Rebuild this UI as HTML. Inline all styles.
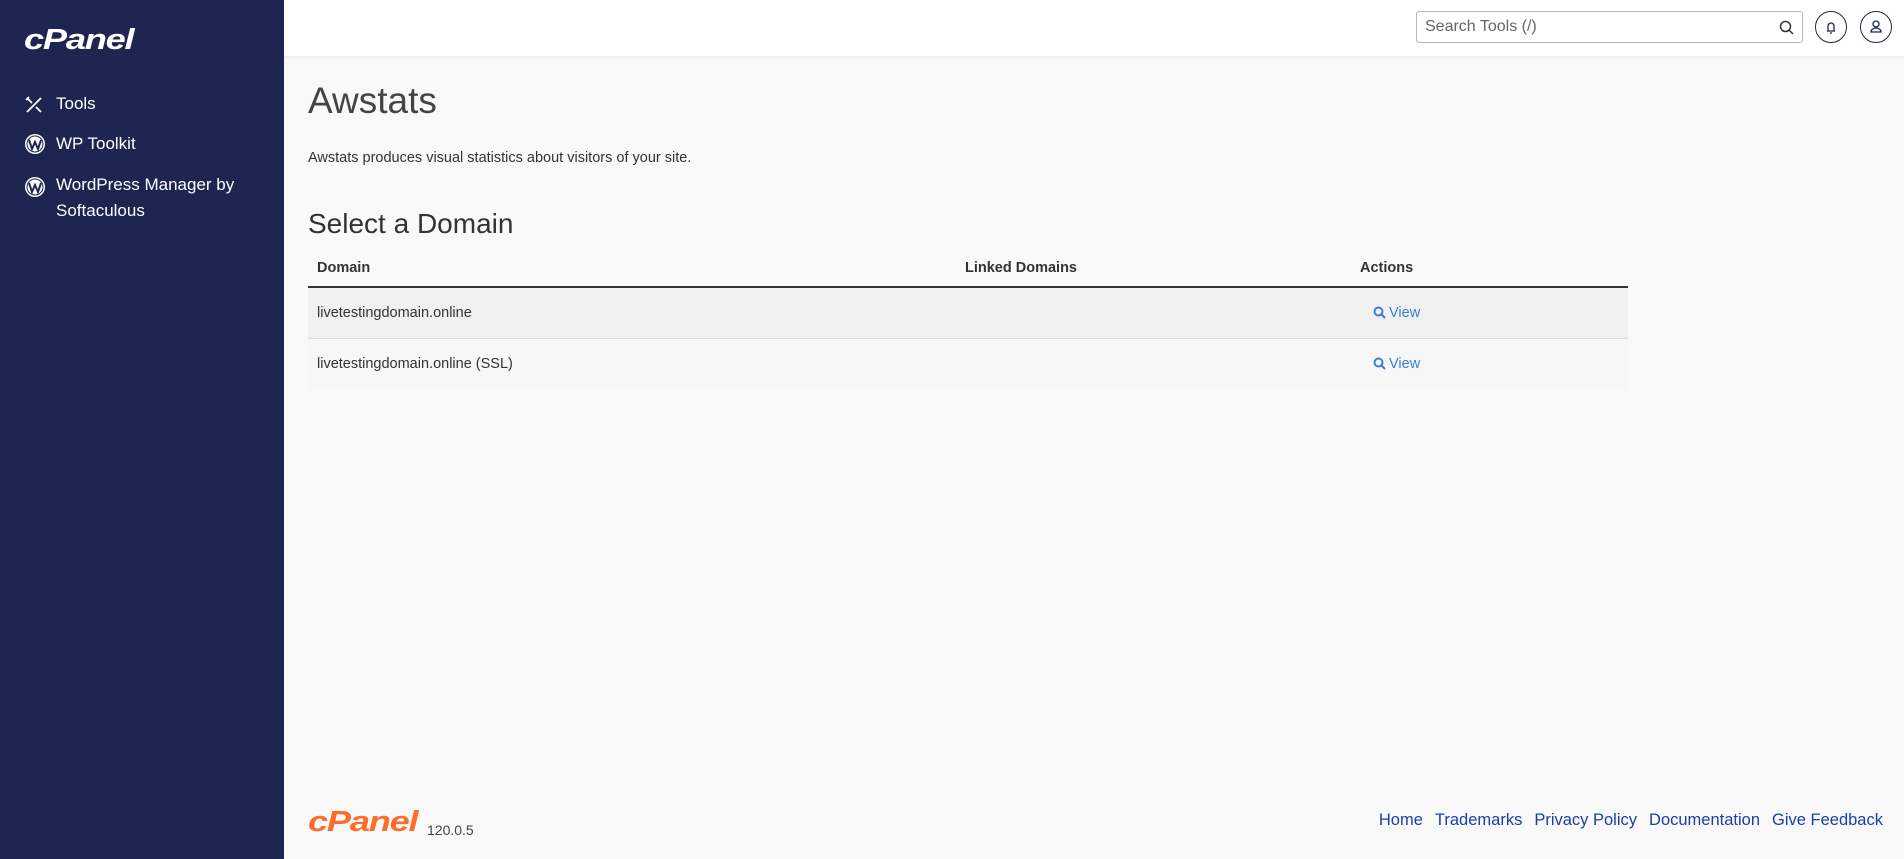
<!DOCTYPE html>
<html><head><meta charset="utf-8"><style>
*{margin:0;padding:0;box-sizing:border-box}
body{width:1904px;height:859px;overflow:hidden;background:#f9f9f9;font-family:"Liberation Sans",sans-serif;color:#333;position:relative}
.side{position:absolute;left:0;top:0;width:284px;height:859px;background:#1f2551;color:#fff}
.logo{position:absolute;font-style:italic;font-weight:bold;letter-spacing:-1px;transform:scaleX(1.25);transform-origin:left center}
.nav{position:absolute;left:56px;font-size:17px;color:#fff;line-height:26px}
.ic{position:absolute;left:24px}
.hdr{position:absolute;left:284px;top:0;right:0;height:56px;background:#fff;box-shadow:0 1px 4px rgba(0,0,0,.08)}
.search{position:absolute;left:1416px;top:11px;width:387px;height:32px;border:1px solid #b5b5c8;border-radius:3px;background:#fff;font-size:16px;color:#666;padding:6px 8px}
.circ{position:absolute;top:11px;width:32px;height:32px;border:1.3px solid #1f2551;border-radius:50%}
h1{position:absolute;left:308px;top:80px;font-size:37px;font-weight:normal;color:#444}
.desc{position:absolute;left:308px;top:150px;font-size:14.5px}
h2{position:absolute;left:308px;top:208px;font-size:28px;font-weight:normal;color:#333}
.th{position:absolute;top:260px;font-size:14.5px;font-weight:bold}
.line{position:absolute;left:308px;width:1320px}
.td{position:absolute;font-size:14.5px}
.view{position:absolute;left:1373px;font-size:14.5px;color:#3b7dd8}
.view svg{vertical-align:-2px;margin-right:3px}
.foot a{color:#1a3fa6;text-decoration:none;margin-left:12px}
</style></head><body>
<div class="side">
<div class="logo" style="left:24px;top:24px;font-size:29px">cPanel</div>
<svg class="ic" style="top:95px" width="20" height="20" viewBox="0 0 20 20" stroke="#fff" stroke-width="1.8" fill="none"><path d="M3 17L17 3M3 3l5 5M12 12l5 5M2 5l3-3"/></svg>
<div class="nav" style="top:91px">Tools</div>
<svg class="ic" style="top:133px" width="22" height="22" viewBox="0 0 22 22"><circle cx="11" cy="11" r="10" fill="#fff"/><circle cx="11" cy="11" r="8" fill="none" stroke="#1f2551" stroke-width="1"/><path d="M5 7l3 9 3-7 3 7 3-9" stroke="#1f2551" stroke-width="2" fill="none"/></svg>
<div class="nav" style="top:131px">WP Toolkit</div>
<svg class="ic" style="top:176px" width="22" height="22" viewBox="0 0 22 22"><circle cx="11" cy="11" r="10" fill="#fff"/><circle cx="11" cy="11" r="8" fill="none" stroke="#1f2551" stroke-width="1"/><path d="M5 7l3 9 3-7 3 7 3-9" stroke="#1f2551" stroke-width="2" fill="none"/></svg>
<div class="nav" style="top:172px">WordPress Manager by<br>Softaculous</div>
</div>
<div class="hdr"></div>
<div class="search">Search Tools (/)<svg style="position:absolute;right:8px;top:8px" width="15" height="15" viewBox="0 0 15 15" fill="none" stroke="#333" stroke-width="1.5"><circle cx="6.5" cy="6.5" r="5"/><path d="M10 10l4 4"/></svg></div>
<div class="circ" style="left:1815px"><svg width="30" height="30" viewBox="0 0 30 30" fill="none" stroke="#1f2551" stroke-width="1.3"><path d="M11 19h8M12 19v-5a3 3 0 016 0v5M14 21h2"/></svg></div>
<div class="circ" style="left:1860px"><svg width="30" height="30" viewBox="0 0 30 30" fill="none" stroke="#1f2551" stroke-width="1.3"><circle cx="15" cy="12" r="3"/><path d="M10 20a5 4 0 0110 0z"/></svg></div>
<h1>Awstats</h1>
<div class="desc">Awstats produces visual statistics about visitors of your site.</div>
<h2>Select a Domain</h2>
<div class="th" style="left:317px">Domain</div>
<div class="th" style="left:965px">Linked Domains</div>
<div class="th" style="left:1360px">Actions</div>
<div class="line" style="top:286px;height:2px;background:#333"></div>
<div class="line" style="top:288px;height:51px;background:#f0f0f0;border-bottom:1px solid #ddd"></div>
<div class="line" style="top:340px;height:49px;background:#f7f7f7"></div>
<div class="td" style="left:317px;top:305px">livetestingdomain.online</div>
<div class="td" style="left:317px;top:356px">livetestingdomain.online (SSL)</div>
<div class="view" style="top:305px"><svg width="13" height="13" viewBox="0 0 13 13" fill="none" stroke="#3b7dd8" stroke-width="2"><circle cx="5.5" cy="5.5" r="4"/><path d="M8.5 8.5l3.5 3.5"/></svg>View</div>
<div class="view" style="top:356px"><svg width="13" height="13" viewBox="0 0 13 13" fill="none" stroke="#3b7dd8" stroke-width="2"><circle cx="5.5" cy="5.5" r="4"/><path d="M8.5 8.5l3.5 3.5"/></svg>View</div>
<div class="logo" style="left:308px;top:806px;font-size:29px;color:#ff6c2c">cPanel</div>
<div style="position:absolute;left:427px;top:822px;font-size:14px;color:#444">120.0.5</div>
<div class="foot" style="position:absolute;right:21px;top:811px;font-size:16.5px"><a>Home</a><a>Trademarks</a><a>Privacy Policy</a><a>Documentation</a><a>Give Feedback</a></div>
</body></html>
